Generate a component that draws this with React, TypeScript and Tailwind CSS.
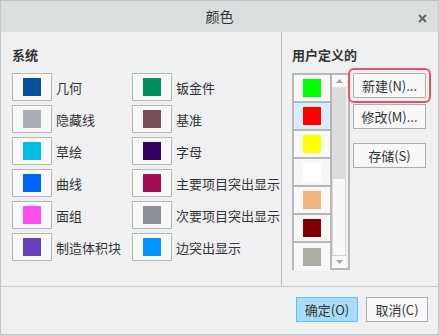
import React from "react";

const font = { fontFamily: '"Noto Sans CJK SC", "Noto Sans", sans-serif' };

const sys: [string, string][] = [
  ["#00529c", "几何"],
  ["#abaeb2", "隐藏线"],
  ["#00beea", "草绘"],
  ["#0064ff", "曲线"],
  ["#ff4be8", "面组"],
  ["#6741bc", "制造体积块"],
];
const sys2: [string, string][] = [
  ["#00905f", "钣金件"],
  ["#7a5054", "基准"],
  ["#36005f", "字母"],
  ["#a50e52", "主要项目突出显示"],
  ["#8d8f98", "次要项目突出显示"],
  ["#0096ff", "边突出显示"],
];
const user = ["#00ff00", "#ff0000", "#ffff00", "#ffffff", "#ebb77b", "#7f0000", "#adada8"];

function Swatch({ c, label }: { c: string; label: string }) {
  return (
    <div className="flex items-center h-[28px]">
      <div className="w-[40px] h-[28px] border border-[#b7b7b7] bg-[#f8f8f8] flex items-center justify-center">
        <div className="w-[18px] h-[18px]" style={{ backgroundColor: c }} />
      </div>
      <span className="ml-[4px] text-[13px] text-[#333] leading-none whitespace-nowrap">{label}</span>
    </div>
  );
}

export default function App() {
  return (
    <div
      style={font}
      className="w-[439px] h-[335px] border border-[#c4c4c4] bg-[#eff0f2] flex flex-col overflow-hidden"
    >
      <div className="h-[31px] bg-[#dbdedf] flex items-center justify-center relative shrink-0">
        <span className="text-[14px] text-[#333]">颜色</span>
        <svg className="absolute right-[11px] top-[13px]" width="9" height="9" viewBox="0 0 9 9">
          <path d="M1 1 L8 8 M8 1 L1 8" stroke="#666" strokeWidth="2" />
        </svg>
      </div>
      <div className="flex h-[255px] border-b border-[#c8c8c8] shrink-0">
        <div className="w-[281px] border-r border-[#b8b8b8] pl-[11px] pt-[14px]">
          <div className="text-[13px] font-bold text-[#333] h-[18px] leading-[18px]">系统</div>
          <div className="mt-[9px] flex">
            <div className="w-[120px] flex flex-col gap-[4px]">
              {sys.map(([c, l]) => (
                <Swatch key={l} c={c} label={l} />
              ))}
            </div>
            <div className="flex flex-col gap-[4px]">
              {sys2.map(([c, l]) => (
                <Swatch key={l} c={c} label={l} />
              ))}
            </div>
          </div>
        </div>
        <div className="flex-1 pl-[10px] pt-[14px]">
          <div className="text-[13px] font-bold text-[#333] h-[18px] leading-[18px]">用户定义的</div>
          <div className="mt-[9px] flex">
            <div className="w-[58px] h-[197px] border-2 border-[#b7b7b7] flex">
              <div className="w-[38px] border-r-2 border-[#b7b7b7] flex flex-col">
                {user.map((c, i) => (
                  <div
                    key={i}
                    className={`h-[28px] shrink-0 flex items-center justify-center border-b-2 border-[#b7b7b7] last:border-b-0 ${
                      i === 1 ? "bg-[#d6eefa]" : "bg-[#f8f8f8]"
                    }`}
                  >
                    <div className="w-[18px] h-[18px]" style={{ backgroundColor: c }} />
                  </div>
                ))}
              </div>
              <div className="w-[14px] flex flex-col bg-[#f8f8f8]">
                <div className="h-[13px] flex items-center justify-center bg-[#f8f8f8] border-b border-[#e0e0e0]">
                  <svg width="7" height="4" viewBox="0 0 7 4">
                    <path d="M0 4 L3.5 0 L7 4 Z" fill="#a8a8a8" />
                  </svg>
                </div>
                <div className="h-[91px] bg-[#dcdcdc]" />
                <div className="flex-1 bg-[#f8f8f8] border-x border-[#d8d8d8]" />
                <div className="h-[13px] flex items-center justify-center bg-[#f8f8f8] border-t border-[#d0d0d0]">
                  <svg width="7" height="4" viewBox="0 0 7 4">
                    <path d="M0 0 L3.5 4 L7 0 Z" fill="#a8a8a8" />
                  </svg>
                </div>
              </div>
            </div>
            <div className="ml-[3px] mt-[0px] flex flex-col">
              <button className="w-[73px] h-[25px] border border-[#adadad] bg-[#f8f8f8] text-[13px] text-[#333] leading-none rounded-[1px] outline-2 outline-solid outline-[#e8506a] outline-offset-[3px]">
                新建(N)...
              </button>
              <button className="mt-[6px] w-[73px] h-[25px] border border-[#adadad] bg-[#f8f8f8] text-[13px] text-[#333] leading-none">
                修改(M)...
              </button>
              <button className="mt-[14px] w-[73px] h-[25px] border border-[#adadad] bg-[#f8f8f8] text-[13px] text-[#333] leading-none">
                存储(S)
              </button>
            </div>
          </div>
        </div>
      </div>
      <div className="flex-1 flex justify-end items-start pt-[10px] pr-[10px] gap-[8px]">
        <button className="w-[62px] h-[25px] border border-[#62c0f2] bg-[#a9dcf9] text-[13px] text-[#333] leading-none">
          确定(O)
        </button>
        <button className="w-[62px] h-[25px] border border-[#adadad] bg-[#f8f8f8] text-[13px] text-[#333] leading-none">
          取消(C)
        </button>
      </div>
    </div>
  );
}
